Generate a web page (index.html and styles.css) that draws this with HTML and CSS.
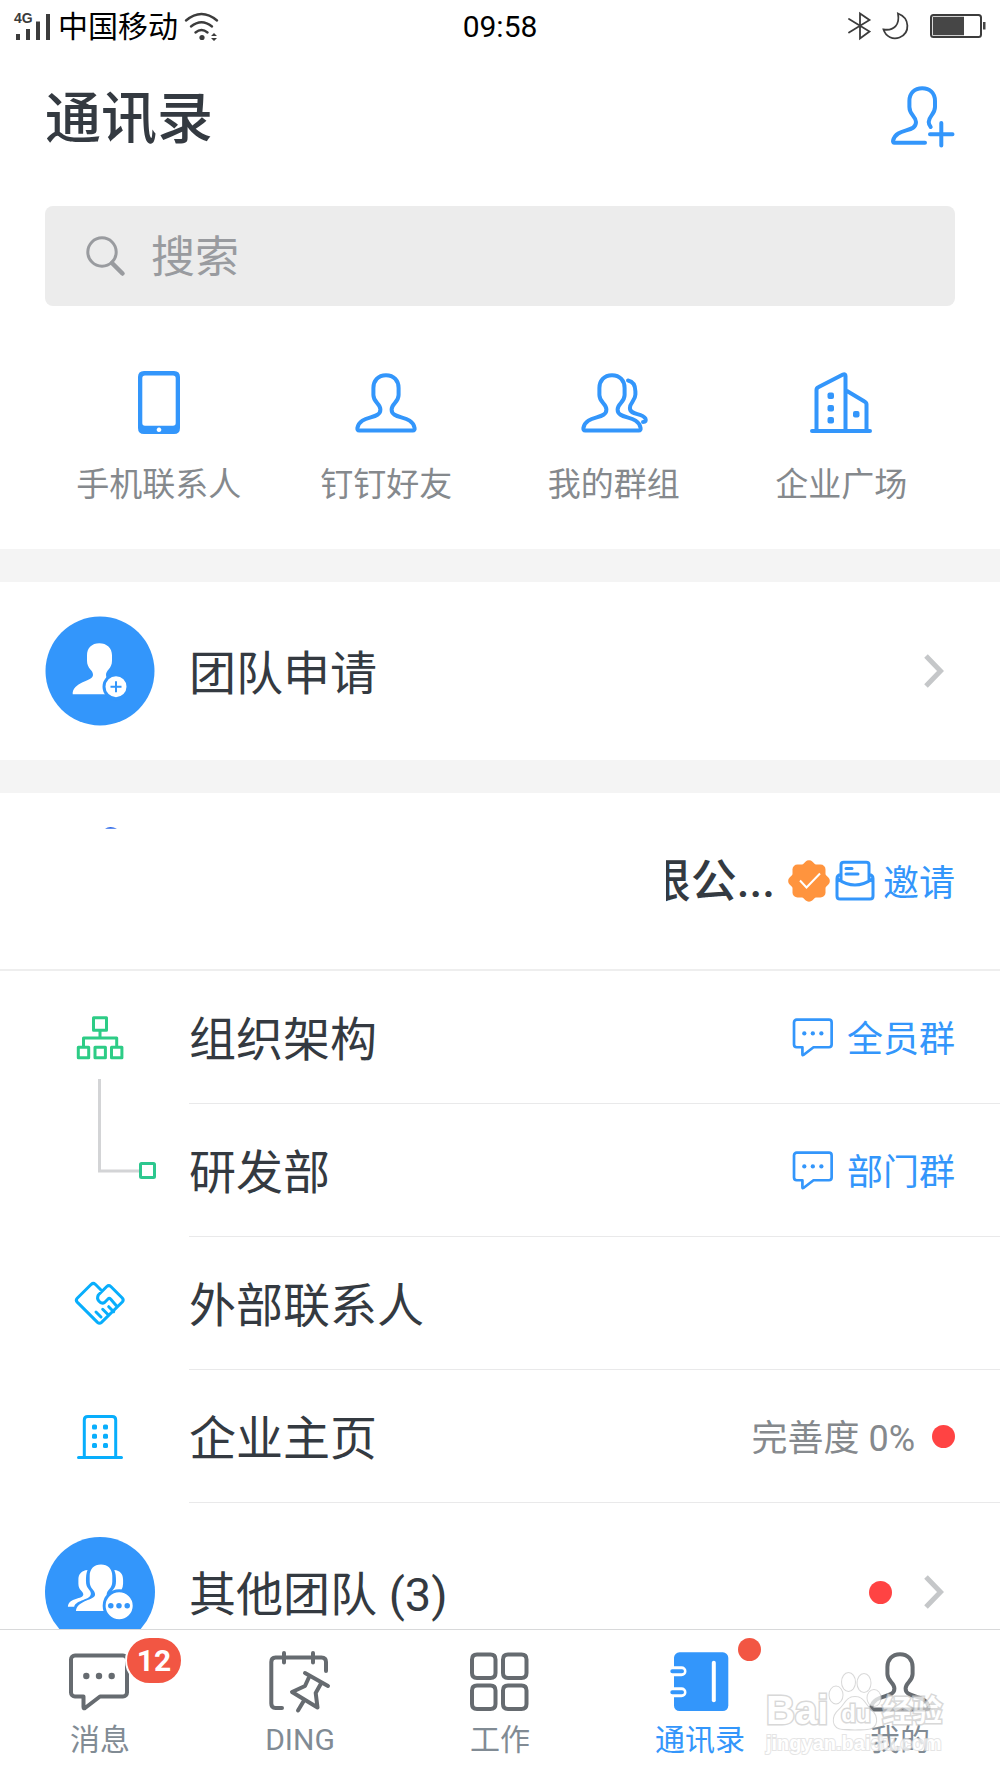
FILE: index.html
```html
<!DOCTYPE html>
<html lang="zh-CN">
<head>
<meta charset="utf-8">
<meta name="viewport" content="width=device-width, initial-scale=1">
<title>通讯录</title>
<link rel="stylesheet" href="styles.css">
</head>
<body>
<svg class="sprite" aria-hidden="true">
  <symbol id="person" viewBox="0 0 64 64">
    <path d="M32 4.200c-8 0-12.600 5.800-12.600 12.800v7c0 7.500 7 8.500 7 14.500 0 10.500-20.400 5-23 18.500-.3 1.600.4 2.600 1.800 2.600h53.600c1.400 0 2.100-1 1.800-2.600-2.600-13.500-23-8-23-18.500 0-6 7-7 7-14.500v-7c0-7-4.600-12.800-12.600-12.800z"/>
  </symbol>
  <symbol id="chat" viewBox="0 0 64 64">
    <path d="M7 5.500H55a4 4 0 0 1 4 4V42.500a4 4 0 0 1-4 4H32L17 58q-1.500 1-1.500-1V46.500H7a4 4 0 0 1-4-4V9.500a4 4 0 0 1 4-4z"/>
    <g class="solid"><circle cx="18.300" cy="26" r="3.200"/><circle cx="31" cy="26" r="3.200"/><circle cx="43.700" cy="26" r="3.200"/></g>
  </symbol>
  <symbol id="chevron" viewBox="0 0 22 36">
    <path d="M3 3 17.500 18 3 33"/>
  </symbol>
</svg>

<div class="app">
  <div class="status">
    <div class="status-side">
      <svg class="ink" width="38" height="30" viewBox="0 0 38 30">
        <text class="network" x="0" y="12">4G</text>
        <path d="M2 23h4v6H2zM12 18h4v11h-4zM22 10.500h4V29h-4zM32 3h4v26h-4z"/>
      </svg>
      <span class="carrier">中国移动</span>
      <svg class="ink-line" width="36" height="30" viewBox="0 0 36 30">
        <path d="M2 9.500Q17.500-3.500 33 9.500M7 15.500q10.500-8.500 21 0M11.500 21.500q6-5 12 0" stroke-width="2.300"/>
        <circle class="ink-dot" cx="18" cy="26.500" r="2.600"/>
        <path class="ink-dot" d="m27 25 3-3 3 3zM27 27l3 3 3-3z"/>
      </svg>
    </div>
    <time class="clock">09:58</time>
    <div class="status-side status-end">
      <svg class="ink-line" width="24" height="28" viewBox="0 0 24 28"><path d="M1 7 21.500 19.500 12 26.500V1.500L21.500 8 1 20.500" stroke-width="1.800"/></svg>
      <svg class="ink-line" width="28" height="28" viewBox="0 0 28 28"><path d="M16 1.500C28 6 28.500 21 17.500 25.500 11 28 4 25 1.500 17.500 12 19 18 13 16 1.500z" stroke-width="1.800"/></svg>
      <svg class="battery" width="56" height="26" viewBox="0 0 56 26"><rect x="1" y="2" width="50" height="22" rx="2.500" class="battery-case"/><path d="M2.800 3.800H34V22.200H2.800zM53 9h2.500v7.500H53z"/></svg>
    </div>
  </div>

  <header class="header">
    <h1 class="title">通讯录</h1>
    <button class="icon-button" type="button" aria-label="添加联系人">
      <svg class="line blue" width="64" height="64" viewBox="0 0 64 64"><path d="M34 57.700H3.500c-1.200 0-1.700-.9-1.400-2.100C5.500 42 25 48.500 25 37c0-6-6.600-7-6.600-15v-6c0-8 5.200-12.700 12.800-12.700S44 8 44 16v6c0 7.500-6.300 9-6.300 15q0 2.500 2 5M50.300 38v22.500M39 49.300h22.500"/></svg>
    </button>
  </header>

  <main class="content">
    <label class="search">
      <svg class="search-icon" width="42" height="42" viewBox="0 0 42 42"><circle cx="17" cy="17" r="14.200"/><path d="m27 28 10.500 10.500" stroke-width="4.500"/></svg>
      <input class="search-input" type="search" placeholder="搜索" aria-label="搜索">
    </label>

    <nav class="shortcuts" aria-label="快捷入口">
      <a class="shortcut" href="#phone">
        <svg class="solid-blue" width="64" height="64" viewBox="0 0 64 64"><path fill-rule="evenodd" d="M17 0h30q6 0 6 6v51q0 6-6 6H17q-6 0-6-6V6q0-6 6-6zM18 4.500q-2.700 0-2.700 2.700V52q0 2.700 2.700 2.700h28q2.700 0 2.700-2.700V7.200q0-2.700-2.700-2.700zM32 56.500a2.300 2.300 0 1 0 .01 0z"/></svg>
        手机联系人
      </a>
      <a class="shortcut" href="#friends">
        <svg class="line blue" width="64" height="64"><use href="#person"/></svg>
        钉钉好友
      </a>
      <a class="shortcut" href="#groups">
        <svg class="line blue" width="68" height="64" viewBox="0 0 68 64"><use href="#person" width="64" height="64"/><path d="M48 9.500c5 1 7.400 5 7.400 11v3c0 6-5.500 8-5.500 13.500 0 7.500 12 4.500 15.500 10.500q1.500 3.500-2.400 3.500"/></svg>
        我的群组
      </a>
      <a class="shortcut" href="#square">
        <svg class="line blue" width="64" height="64" viewBox="0 0 64 64"><path d="M3 60h58M7.500 60V19q0-2 1.700-2.800L34 3.500q2.500-1 2.500 1.500V60M38 20l17.500 10.500q2 1 2 3V60"/><g class="solid"><rect x="18.500" y="21.500" width="6.500" height="6.500" rx="2"/><rect x="18.500" y="34" width="6.500" height="6.500" rx="2"/><rect x="18.500" y="46" width="6.500" height="6.500" rx="2"/><rect x="44" y="40" width="6.500" height="6.500" rx="2"/></g></svg>
        企业广场
      </a>
    </nav>

    <ul class="list banded">
      <li class="row tall">
        <svg class="avatar" viewBox="0 0 110 110"><circle class="fill-blue" cx="55" cy="55" r="54.500"/><path class="fill-white" d="M54.300 27.200c-7.500 0-12.300 4.800-12.300 12v5.500c0 8 6 9 6 14 0 7-17.500 6-20.300 17.500v2.100H64L61 59c0-5.300 6-6.300 6-14.300v-5.500c0-7.200-5.200-12-12.700-12z"/><circle class="fill-white ring" cx="71" cy="70.700" r="12"/><path class="glyph-line" d="M71 65.200v11M65.500 70.700h11"/></svg>
        <a class="row-body" href="#requests"><span class="name">团队申请</span><svg class="chevron" width="22" height="36"><use href="#chevron"/></svg></a>
      </li>
    </ul>

    <section class="company">
      <svg class="company-logo" viewBox="0 0 110 110"><path d="M60 2.800Q65-1 72 2.800z"/></svg>
      <h2 class="company-name"><span>限公...</span></h2>
      <svg class="verified" width="44" height="44" viewBox="0 0 44 44"><g class="seal"><rect x="5.500" y="5.500" width="33" height="33" rx="5"/><rect x="5.800" y="5.800" width="32.400" height="32.400" rx="5" transform="rotate(45 22 22)"/></g><path d="m13 21.500 6.500 7L33 14.500"/></svg>
      <a class="action invite" href="#invite">
        <svg class="line thin" width="40" height="42" viewBox="0 0 40 42"><path d="M6 14.500Q2 15 2 18.500V36q0 3 3 3h30q3 0 3-3V18.500Q38 15 34 14.500M2.500 19q17.500 12 35 0M6 21V5q0-2.700 2.700-2.700h22.600Q34 2.300 34 5v16M11 8.500h6M11 14h12"/></svg>
        <span>邀请</span>
      </a>
    </section>

    <ul class="list">
      <li class="row">
        <div class="row-icon"><svg class="line green" width="48" height="46" viewBox="0 0 48 46"><path d="M17.500 2.700h13v12.500h-13zM2.300 32.300h10.400v10.500H2.300zM19 32.300h10.400v10.500H19zM35.500 32.300h10.400v10.500H35.500zM7.500 32V23h33.200v9M24 15.500V23"/></svg></div>
        <div class="row-body"><a class="name" href="#structure">组织架构</a><a class="action" href="#all"><svg class="line" width="43" height="43"><use href="#chat"/></svg><span>全员群</span></a></div>
      </li>
      <li class="row">
        <div class="row-icon"><svg class="branch" width="60" height="106" viewBox="0 0 60 106"><path class="branch-line" d="M2.500 0v92H43"/><rect x="43.500" y="84.500" width="14" height="14" rx="1"/></svg></div>
        <div class="row-body"><a class="name" href="#rd">研发部</a><a class="action" href="#department"><svg class="line" width="43" height="43"><use href="#chat"/></svg><span>部门群</span></a></div>
      </li>
      <li class="row">
        <div class="row-icon"><svg class="line cyan" width="52" height="46" viewBox="0 0 52 46"><path d="M28 10 21.300 3.300q-2-1.800-4 0L3.200 17.300q-1.800 1.900 0 3.800L23.500 41.400q2 1.800 4 0L48.300 21q1.800-2 0-4L36.800 5.500q-2-1.800-4 0l-8.500 8.500q-1.800 3.500.5 6 3 3.500 6 1.200l3.700-3.700q1.500-.5 2.500 1l6 7M22 31l5 5M28.700 28.300l5 5M34.700 25.700l5 5"/></svg></div>
        <a class="row-body" href="#external"><span class="name">外部联系人</span></a>
      </li>
      <li class="row">
        <div class="row-icon"><svg class="line cyan" width="48" height="46" viewBox="0 0 48 46"><path d="M2.500 43.500h43M8.300 43V6q0-3.500 3.500-3.500h24.400q3.500 0 3.500 3.500v37"/><g class="solid"><rect x="16" y="10.500" width="5" height="5" rx="1.500"/><rect x="27" y="10.500" width="5" height="5" rx="1.500"/><rect x="16" y="19.800" width="5" height="5" rx="1.500"/><rect x="27" y="19.800" width="5" height="5" rx="1.500"/><rect x="16" y="29" width="5" height="5" rx="1.500"/><rect x="27" y="29" width="5" height="5" rx="1.500"/></g></svg></div>
        <a class="row-body" href="#homepage"><span class="name">企业主页</span><span class="meta">完善度 0%</span><span class="dot"></span></a>
      </li>
      <li class="row tall">
        <svg class="avatar" viewBox="0 0 112 112"><circle class="fill-blue" cx="56" cy="56" r="56"/><path class="fill-white" d="M43.300 33.500c-6 .5-9.300 4-9.300 10v4c0 7 5 7 5 11 0 5-15 3-15.700 12.500h6.400c2-7.500 17-6.500 17-13.500 0-4-5-4.500-5-12.500 0-5 .3-8 1.600-11.500zM70.500 33.500c6 .5 9 4 9 10v4q0 4-2 7.200-5.500 0-10 2.300c1-4 4.800-4.500 4.800-12 0-5-.3-8-1.800-11.500zM57 28c-7 0-11.500 4.500-11.500 11.500v6c0 7 5.500 8.500 5.500 13 0 6-18 5.500-19.500 16.800H64l-1.200-16.800c0-4.500 5.700-6 5.700-13v-6C68.500 32.500 64 28 57 28z"/><circle class="fill-white ring" cx="75.500" cy="70" r="15.300"/><g class="fill-blue"><circle cx="67" cy="70" r="2.800"/><circle cx="75.300" cy="70" r="2.800"/><circle cx="83.700" cy="70" r="2.800"/></g></svg>
        <a class="row-body" href="#teams"><span class="name">其他团队 (3)</span><span class="dot"></span><svg class="chevron" width="22" height="36"><use href="#chevron"/></svg></a>
      </li>
    </ul>
  </main>

  <nav class="tabs" aria-label="主导航">
    <a class="tab" href="#messages">
      <span class="tab-icon"><svg class="line" width="64" height="64"><use href="#chat"/></svg><b class="badge">12</b></span>消息
    </a>
    <a class="tab" href="#ding">
      <span class="tab-icon"><svg class="line" width="64" height="64" viewBox="0 0 64 64"><path d="M58 21V12q0-4.500-4.500-4.500h-46Q3.300 7.500 3.300 12v41.500q0 4.500 4.200 4.500H14M16 3v9.500M45 3v9.500M37 23l23 13M41.300 26.500 37 36 24 42l25.500 15.500L47.700 43 53 33.500M36 50.500 30 60.500"/></svg></span>DING
    </a>
    <a class="tab" href="#work">
      <span class="tab-icon"><svg class="line" width="64" height="64" viewBox="0 0 64 64"><path d="M9 4.500h13.500q5 0 5 5V23q0 5-5 5H9q-5 0-5-5V9.500q0-5 5-5zM40 4.500h13.500q5 0 5 5V23q0 5-5 5H40q-5 0-5-5V9.500q0-5 5-5zM9 35.500h13.500q5 0 5 5V54q0 5-5 5H9q-5 0-5-5V40.500q0-5 5-5zM40 35.500h13.500q5 0 5 5V54q0 5-5 5H40q-5 0-5-5V40.500q0-5 5-5z"/></svg></span>工作
    </a>
    <a class="tab active" href="#contacts" aria-current="page">
      <span class="tab-icon"><svg width="64" height="64" viewBox="0 0 64 64"><rect class="fill-blue" x="6" y="2.300" width="54.300" height="58.700" rx="5.500"/><path class="book-gap" d="M3 21.300h10.500M3 42.200h10.500"/><path class="book-rings" d="M4.300 21.300H14M4.300 42.200H14"/><path class="book-spine" d="M45.800 12.700V50.300"/></svg><i class="dot tab-dot"></i></span>通讯录
    </a>
    <a class="tab" href="#me">
      <span class="tab-icon"><svg class="line" width="64" height="64"><use href="#person"/></svg></span>我的
    </a>
    <div class="watermark" aria-hidden="true">
      <div class="watermark-brand">
        <span class="watermark-bai">Bai</span>
        <span class="paw">
          <svg width="54" height="58" viewBox="0 0 54 58"><ellipse cx="8" cy="23" rx="6.500" ry="8.500"/><ellipse cx="20.500" cy="10" rx="6.500" ry="9"/><ellipse cx="36" cy="11" rx="6.500" ry="9"/><ellipse cx="46" cy="26" rx="6.500" ry="8"/><path d="M27 25c-9 0-10 8-16 13-7 6-8 18 4 19 6 .5 18 .5 24 0 12-1 11-13 4-19-6-5-7-13-16-13z"/></svg>
          <span class="watermark-du">du</span>
        </span>
        <span class="watermark-cn">经验</span>
      </div>
      <div class="watermark-url">jingyan.baidu.com</div>
    </div>
  </nav>
</div>
</body>
</html>
```

FILE: styles.css
```css
* { box-sizing: border-box; }

:root {
  --blue: #3396fb;
  --text: #343a41;
  --muted: #85898d;
  --tab: #666b70;
  --line: #e9e9ea;
}

body {
  margin: 0;
  background: #fff;
  color: var(--text);
  font-family: Roboto, "Noto Sans CJK SC", sans-serif;
}

a { color: inherit; text-decoration: none; }
svg { display: block; flex: none; overflow: visible; }
h1, h2, ul { margin: 0; padding: 0; }

.sprite { position: absolute; width: 0; height: 0; }

.app {
  display: flex;
  flex-direction: column;
  height: 100vh;
  overflow: hidden;
}

/* Shared icon styles */
.line {
  fill: none;
  stroke: currentColor;
  stroke-width: 4;
  stroke-linecap: round;
  stroke-linejoin: round;
}
.solid { fill: currentColor; stroke: none; }
.solid-blue { fill: var(--blue); }
.blue { color: var(--blue); }
.green { color: #2dcc86; stroke-width: 3; }
.cyan { color: #08aefc; stroke-width: 3; }
.thin { stroke-width: 3; }
.fill-blue { fill: var(--blue); }
.fill-white { fill: #fff; }
.ring { stroke: var(--blue); stroke-width: 3; }
.glyph-line { stroke: var(--blue); stroke-width: 2; }

/* Status bar */
.status {
  display: grid;
  grid-template-columns: 1fr auto 1fr;
  align-items: center;
  height: 52px;
  padding: 0 14px;
  font-size: 30px;
  line-height: 36px;
  flex: none;
}
.status-side { display: flex; align-items: center; gap: 6px; }
.status-end { justify-content: flex-end; gap: 10px; }
.carrier, .clock { padding-top: 2px; color: #000; }
.ink { fill: #3c3c3c; }
.network { font: bold 14px "Liberation Sans", sans-serif; }
.ink-line { fill: none; stroke: #3c3c3c; stroke-linecap: round; }
.ink-dot { fill: #3c3c3c; stroke: none; }
.battery { fill: #464646; margin-left: 10px; }
.battery-case { fill: none; stroke: #3c3c3c; stroke-width: 2; }

/* Page header */
.header {
  display: flex;
  align-items: center;
  justify-content: space-between;
  flex: none;
  height: 130px;
  padding: 0 45px;
}
.title { padding-top: 4px; font-size: 56px; line-height: 64px; font-weight: 500; }
.icon-button { padding: 0; border: 0; background: none; }

.content { flex: 1; min-height: 0; overflow: hidden; }

.search {
  display: flex;
  align-items: center;
  gap: 24px;
  height: 100px;
  margin: 24px 45px 0;
  padding: 0 40px;
  border-radius: 8px;
  background: #ececec;
}
.search-icon { fill: none; stroke: #999b9f; stroke-width: 3; stroke-linecap: round; }
.search-input {
  flex: 1;
  min-width: 0;
  padding: 4px 0 0;
  border: 0;
  outline: 0;
  background: none;
  color: var(--text);
  font: inherit;
  font-size: 44px;
  line-height: 60px;
}
.search-input::placeholder { color: #999b9f; opacity: 1; }

.shortcuts {
  display: grid;
  grid-template-columns: repeat(4, 1fr);
  padding: 65px 45px 40px;
}
.shortcut {
  display: flex;
  flex-direction: column;
  align-items: center;
  gap: 26px;
  color: var(--muted);
  font-size: 33px;
  line-height: 48px;
}

/* Lists */
.list { list-style: none; }
.banded { border: solid #f4f4f4; border-width: 33px 0; }
.row { display: flex; align-items: center; gap: 34px; padding-left: 45px; }
.avatar { width: 110px; height: 110px; }
.row-icon {
  position: relative;
  display: flex;
  justify-content: center;
  flex: none;
  width: 110px;
}
.row-body {
  display: flex;
  align-items: center;
  flex: 1;
  height: 133px;
  padding-right: 45px;
  border-bottom: 1px solid var(--line);
}
.tall .row-body { height: 178px; border: 0; }
.name { margin-right: auto; padding-top: 6px; font-size: 47px; line-height: 60px; }
.chevron {
  margin: 0 10px 0 31px;
  fill: none;
  stroke: #c5c7c9;
  stroke-width: 5;
}
.dot { width: 23px; height: 23px; border-radius: 50%; background: #ff4343; }
.meta {
  margin-right: 17px;
  padding-top: 6px;
  color: var(--muted);
  font-size: 36px;
  line-height: 48px;
}
.action {
  display: flex;
  align-items: center;
  gap: 12px;
  color: var(--blue);
  font-size: 36px;
  line-height: 48px;
}
.action span { padding-top: 5px; }

/* Connector running from the organisation icon down to the department */
.branch {
  position: absolute;
  left: 52px;
  bottom: -14px;
  fill: #fff;
  stroke: #2dc78f;
  stroke-width: 3;
}
.branch-line { fill: none; stroke: #d3d4d6; }

.company {
  display: flex;
  align-items: center;
  height: 178px;
  padding: 0 45px;
  border-bottom: 2px solid #eee;
}
.company-logo { width: 110px; height: 110px; margin-right: auto; fill: #2d68e8; }
.company-name {
  display: flex;
  justify-content: flex-end;
  width: 109px;
  overflow: hidden;
  font-size: 46px;
  line-height: 60px;
  font-weight: 500;
  white-space: nowrap;
}
.verified { margin: 0 4px 0 12px; fill: none; stroke: #fff; stroke-width: 2; }
.seal { fill: #ff943e; stroke: none; }
.invite { gap: 8px; }

/* Bottom tabs */
.tabs {
  position: relative;
  display: grid;
  grid-template-columns: repeat(5, 1fr);
  flex: none;
  height: 149px;
  border-top: 1px solid #d8d9da;
  background: #fff;
}
.tab {
  display: flex;
  flex-direction: column;
  align-items: center;
  gap: 4px;
  padding-top: 20px;
  color: #818b94;
  font-size: 30px;
  line-height: 44px;
}
.tab-icon { position: relative; color: var(--tab); }
.active { color: var(--blue); }
.badge {
  position: absolute;
  left: 57px;
  top: -14px;
  width: 58px;
  border: 2px solid #fff;
  border-radius: 25px;
  background: #f25643;
  color: #fff;
  font-size: 30px;
  line-height: 45px;
  text-align: center;
}
.tab-dot { position: absolute; left: 70px; top: -12px; background: #f25643; }
.book-gap { stroke: #fff; stroke-width: 10; stroke-linecap: round; }
.book-rings { stroke: var(--blue); stroke-width: 4; stroke-linecap: round; }
.book-spine { stroke: #fff; stroke-width: 4; stroke-linecap: round; }

/* Translucent site mark over the last tab */
.watermark {
  position: absolute;
  right: 54px;
  bottom: 22px;
  width: 180px;
  opacity: 0.75;
  color: #fff;
  font-family: "Liberation Sans", "Noto Sans CJK SC", sans-serif;
  font-weight: bold;
  -webkit-text-stroke: 3px #ccc;
  paint-order: stroke fill;
  pointer-events: none;
}
.watermark-brand { display: flex; align-items: flex-end; }
.watermark-bai { font-size: 40px; line-height: 40px; }
.watermark-cn { font-size: 30px; line-height: 38px; }
.watermark-url { font-size: 20px; line-height: 26px; -webkit-text-stroke: 2px #ddd; }
.paw { position: relative; fill: #fff; stroke: #ccc; stroke-width: 2; }
.watermark-du { position: absolute; left: 13px; bottom: 2px; font-size: 24px; line-height: 28px; }
```
